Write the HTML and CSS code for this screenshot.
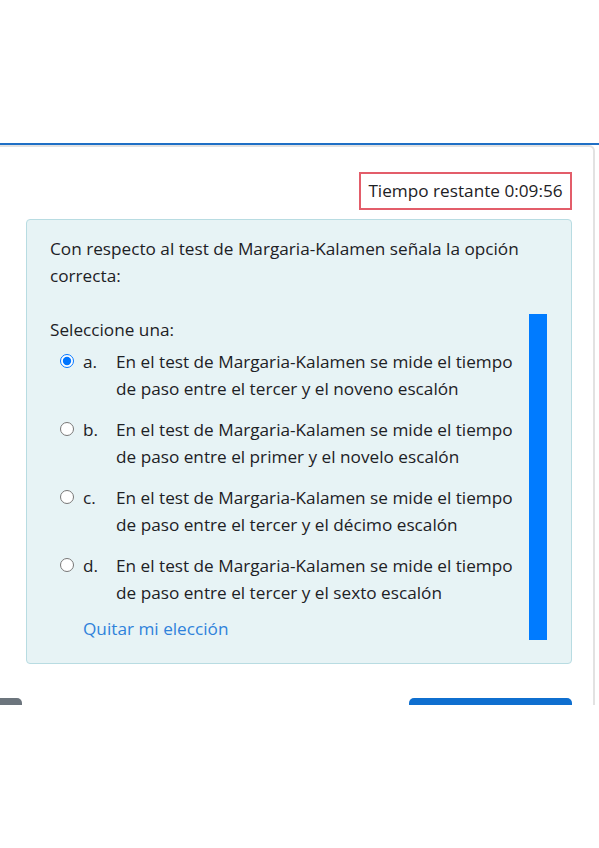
FILE: index.html
```html
<!DOCTYPE html>
<html lang="es">
<head>
<meta charset="utf-8">
<link rel="stylesheet" href="styles.css">
<title>Quiz</title>
</head>
<body>
<div class="top-space"></div>
<div class="nav-line"></div>
<div class="viewport">
  <div class="card">
    <div class="timer-row">
      <div class="timer">Tiempo restante 0:09:56</div>
    </div>
    <div class="formulation">
      <p class="qtext">Con respecto al test de Margaria-Kalamen señala la opción<br>correcta:</p>
      <div class="prompt">Seleccione una:</div>
      <div class="answers">
        <label class="answer">
          <input type="radio" name="q" checked>
          <span class="letter">a.</span>
          <span class="atext">En el test de Margaria-Kalamen se mide el tiempo<br>de paso entre el tercer y el noveno escalón</span>
        </label>
        <label class="answer">
          <input type="radio" name="q">
          <span class="letter">b.</span>
          <span class="atext">En el test de Margaria-Kalamen se mide el tiempo<br>de paso entre el primer y el novelo escalón</span>
        </label>
        <label class="answer">
          <input type="radio" name="q">
          <span class="letter">c.</span>
          <span class="atext">En el test de Margaria-Kalamen se mide el tiempo<br>de paso entre el tercer y el décimo escalón</span>
        </label>
        <label class="answer">
          <input type="radio" name="q">
          <span class="letter">d.</span>
          <span class="atext">En el test de Margaria-Kalamen se mide el tiempo<br>de paso entre el tercer y el sexto escalón</span>
        </label>
      </div>
      <a class="clear" href="#">Quitar mi elección</a>
      <div class="scrollbar"></div>
    </div>
    <div class="buttons">
      <span class="btn btn-prev"></span>
      <span class="btn btn-next"></span>
    </div>
  </div>
</div>
</body>
</html>
```
FILE: styles.css
```css
html, body {
  margin: 0;
  padding: 0;
  background: #ffffff;
}
body {
  font-family: "Open Sans", "Noto Sans", sans-serif;
  font-size: 17.2px;
  color: #1d2125;
  width: 599px;
  height: 848px;
  overflow: hidden;
}
.top-space {
  height: 143px;
}
.nav-line {
  height: 2px;
  background: #1f6fc5;
}
.viewport {
  height: 560px;
  overflow: hidden;
}
.card {
  margin-left: -12px;
  width: 607px;
  box-sizing: border-box;
  border: 2px solid #e2e2e2;
  border-left: none;
  border-bottom: none;
  border-top-right-radius: 6px;
  height: 700px;
  padding: 0 21px 0 38px;
}
.timer-row {
  display: flex;
  justify-content: flex-end;
  padding-top: 25px;
}
.timer {
  border: 2px solid #e35d6a;
  height: 38px;
  width: 213px;
  box-sizing: border-box;
  display: flex;
  align-items: center;
  justify-content: center;
  line-height: 1;
  color: #1d2125;
}
.formulation {
  position: relative;
  margin-top: 9px;
  background: #e7f3f5;
  border: 1px solid #b8dce2;
  border-radius: 4px;
  padding: 15px 20px 21px 23px;
  line-height: 27px;
  height: 445px;
  box-sizing: border-box;
}
.qtext {
  margin: 0 0 27px 0;
}
.prompt {
  margin: 0;
}
.answers {
  display: flex;
  flex-direction: column;
  gap: 14px;
  margin-top: 5px;
}
.answer {
  display: flex;
  align-items: flex-start;
}
.answer input {
  margin: 6px 0 0 10px;
  width: 14px;
  height: 14px;
  flex: none;
  accent-color: #0075ff;
}
.letter {
  width: 33px;
  margin-left: 9px;
  flex: none;
}
.atext {
  display: block;
}
.clear {
  display: inline-block;
  margin-top: 9px;
  margin-left: 33px;
  color: #2f82db;
  text-decoration: none;
}
.scrollbar {
  position: absolute;
  left: 502px;
  top: 94px;
  width: 18px;
  height: 326px;
  background: #007bff;
}
.buttons {
  display: flex;
  justify-content: space-between;
  margin-top: 34px;
  margin-left: -26px;
}
.btn {
  display: block;
  height: 40px;
  border-radius: 5px;
}
.btn-prev {
  width: 40px;
  margin-left: -18px;
  background: #6c757d;
}
.btn-next {
  width: 163px;
  background: #0f6fcf;
}
```
